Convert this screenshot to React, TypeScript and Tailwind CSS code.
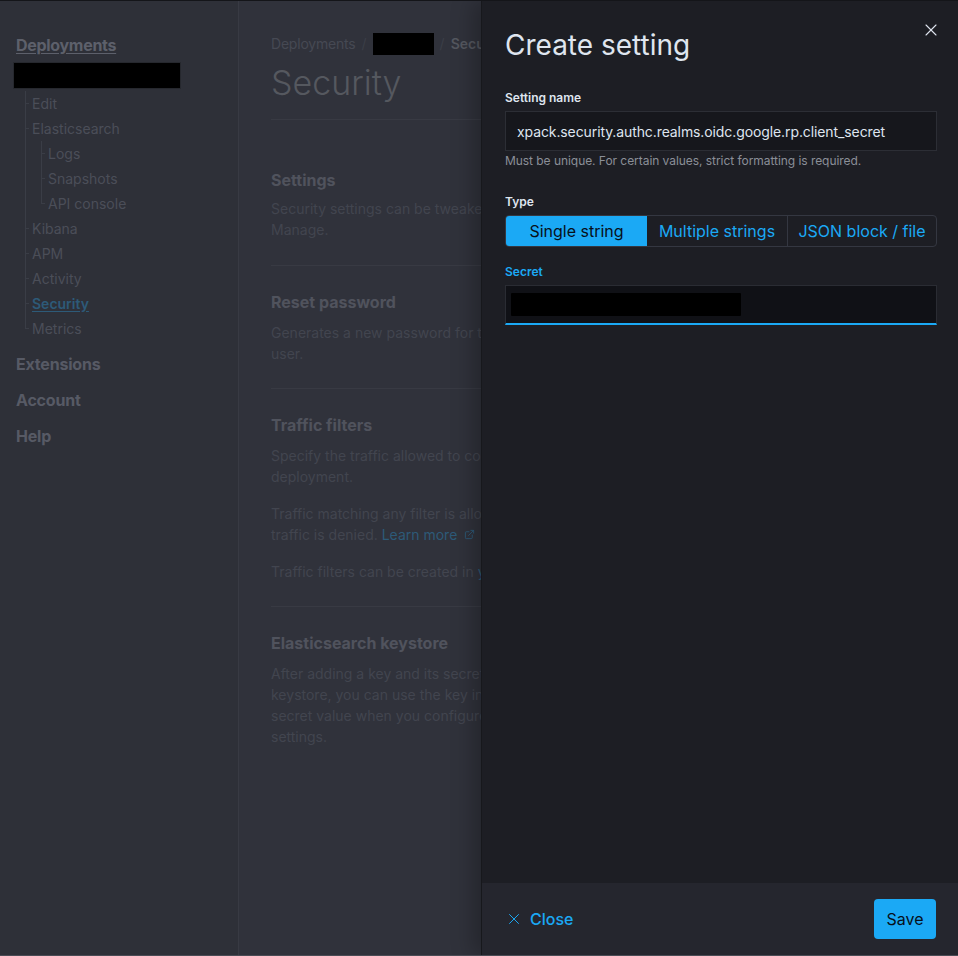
import React from 'react';
import { X, ExternalLink } from 'lucide-react';

const font = { fontFamily: 'Inter, "Noto Sans", sans-serif' };

const Redacted = ({ className }: { className: string }) => (
  <div className={`bg-black ${className}`} />
);

const TreeItem = ({
  label,
  last,
  active,
  children,
}: {
  label: string;
  last?: boolean;
  active?: boolean;
  children?: React.ReactNode;
}) => (
  <div className="relative">
    {/* vertical guide + tick */}
    <span
      className={`absolute left-0 top-0 w-px bg-[#3a3d46] ${last ? 'h-[13px]' : 'h-full'}`}
    />
    <div className="flex h-[25px] items-center">
      <span className="h-px w-[4px] bg-[#3a3d46]" />
      <span
        className={`ml-[3px] ${
          active ? 'font-semibold text-[#2d5a78] underline underline-offset-2' : 'text-[#4b4e58]'
        }`}
      >
        {label}
      </span>
    </div>
    {children}
  </div>
);

const Section = ({ title, children }: { title: string; children: React.ReactNode }) => (
  <div className="border-b border-[#383a43] pt-[24px] pb-[24px]">
    <h3 className="text-[16px] leading-[24px] font-bold text-[#50535d]">{title}</h3>
    <div className="mt-[8px] space-y-[16px] text-[14px] leading-[21px] text-[#42454f]">{children}</div>
  </div>
);

export default function App() {
  return (
    <div
      style={font}
      className="relative flex h-[956px] w-[958px] overflow-hidden border-t border-b border-t-[#141519] border-b-[#4a4c55] bg-[#30323b]"
    >
      {/* Sidebar */}
      <aside className="w-[239px] shrink-0 border-r border-[#383a43] bg-[#2e3038] pt-[32px]">
        <div className="px-4">
          <a className="text-[16px] leading-[24px] font-bold tracking-[-0.3px] text-[#5d606b] underline underline-offset-2">
            Deployments
          </a>
        </div>
        <div className="ml-[13px] mt-[5px]">
          <Redacted className="h-[27px] w-[168px] border border-[#26282e]" />
        </div>
        <div className="ml-[25px] mt-[2px] text-[14px]">
          <TreeItem label="Edit" />
          <TreeItem label="Elasticsearch">
            <div className="ml-[16px]">
              <TreeItem label="Logs" />
              <TreeItem label="Snapshots" />
              <TreeItem label="API console" last />
            </div>
          </TreeItem>
          <TreeItem label="Kibana" />
          <TreeItem label="APM" />
          <TreeItem label="Activity" />
          <TreeItem label="Security" active />
          <TreeItem label="Metrics" last />
        </div>
        <div className="mt-[5px] px-4 text-[16px] font-bold tracking-[-0.2px] text-[#575a65]">
          <div className="flex h-[36px] items-center">Extensions</div>
          <div className="flex h-[36px] items-center">Account</div>
          <div className="flex h-[36px] items-center">Help</div>
        </div>
      </aside>

      {/* Main page content (dimmed under flyout) */}
      <main className="flex-1 pl-[32px] pt-[32px]">
        <div className="flex items-center gap-[6px] text-[14px] leading-[22px] text-[#464953]">
          <span className="tracking-[-0.2px]">Deployments</span>
          <span className="text-[#3b3e47]">/</span>
          <Redacted className="h-[22px] w-[61px]" />
          <span className="text-[#3b3e47]">/</span>
          <span className="font-semibold text-[#54575f]">Security</span>
        </div>
        <h1 className="mt-[8px] text-[34px] leading-[40px] font-light text-[#55585f]">Security</h1>
        <div className="w-[420px]">
          <div className="mt-[16px] border-b border-[#383a43]" />
          <div className="pt-[48px]">
            <div className="border-b border-[#383a43] pb-[25px]">
              <h3 className="text-[16px] leading-[24px] font-bold text-[#50535d]">Settings</h3>
              <div className="mt-[6px] text-[14px] leading-[21px] text-[#42454f]">
                <p>
                  Security settings can be tweaked in the user
                  <br />
                  Manage.
                </p>
              </div>
            </div>
          </div>
          <Section title="Reset password">
            <p>
              Generates a new password for the elastic
              <br />
              user.
            </p>
          </Section>
          <Section title="Traffic filters">
            <p>
              Specify the traffic allowed to connect to this
              <br />
              deployment.
            </p>
            <p>
              Traffic matching any filter is allowed. All other
              <br />
              traffic is denied.{' '}
              <span className="text-[#2d5a78]">
                Learn more <ExternalLink className="ml-[3px] inline h-[11px] w-[11px] align-baseline" />
              </span>
            </p>
            <p>
              Traffic filters can be created in <span className="text-[#2d5a78]">your account</span>
            </p>
          </Section>
          <div className="pt-[24px]">
            <h3 className="text-[16px] leading-[24px] font-bold text-[#50535d]">Elasticsearch keystore</h3>
            <div className="mt-[8px] text-[14px] leading-[21px] text-[#42454f]">
              <p>
                After adding a key and its secret value to the
                <br />
                keystore, you can use the key in place of the
                <br />
                secret value when you configure sensitive
                <br />
                settings.
              </p>
            </div>
          </div>
        </div>
      </main>

      {/* Flyout */}
      <section className="absolute top-0 right-0 bottom-0 flex w-[477px] flex-col border-l border-[#17181c] bg-[#1d1e24] shadow-[-8px_0_20px_rgba(0,0,0,0.25)]">
        <button className="absolute top-[19px] right-[17px] text-[#dfe5ef]">
          <X className="h-[20px] w-[20px]" strokeWidth={1.3} />
        </button>
        <div className="flex-1 pl-[23px] pr-[21px] pt-[26px]">
          <h2 className="text-[28px] leading-[36px] font-normal text-[#dfe5ef]">Create setting</h2>

          <label className="mt-[27px] block text-[12px] leading-[16px] font-semibold text-[#dfe5ef]">
            Setting name
          </label>
          <div className="mt-[5px] flex h-[40px] items-center border border-[#2c2e35] bg-[#16171c] px-[11px] text-[14px] tracking-[-0.1px] text-[#dfe5ef]">
            xpack.security.authc.realms.oidc.google.rp.client_secret
          </div>
          <p className="mt-[2px] text-[12px] leading-[16px] tracking-[-0.05px] text-[#8b8f98]">
            Must be unique. For certain values, strict formatting is required.
          </p>

          <label className="mt-[26px] block text-[12px] leading-[14px] font-semibold text-[#dfe5ef]">
            Type
          </label>
          <div className="mt-[6px] flex h-[32px] overflow-hidden rounded-[4px] border border-[#343741] text-[16px]">
            <button className="w-[141px] bg-[#1ba9f5] text-[#07101a]">Single string</button>
            <button className="w-[141px] border-r border-[#343741] text-[#1ba9f5]">Multiple strings</button>
            <button className="flex-1 text-[#1ba9f5]">JSON block / file</button>
          </div>

          <label className="mt-[17px] block text-[12px] leading-[16px] font-semibold text-[#1ba9f5]">
            Secret
          </label>
          <div className="mt-[5px] flex h-[40px] items-center border-x border-t border-[#2a2c33] border-b-2 border-b-[#1ba9f5] bg-[#101116] px-[5px]">
            <Redacted className="h-[23px] w-[230px] rounded-[1px]" />
          </div>
        </div>

        <footer className="flex h-[72px] items-center justify-between bg-[#25262e] pl-[23px] pr-[22px]">
          <button className="flex items-center gap-[7px] text-[16px] font-medium text-[#1ba9f5]">
            <X className="h-[18px] w-[18px]" strokeWidth={1.3} />
            Close
          </button>
          <button className="h-[40px] w-[62px] rounded-[4px] bg-[#1ba9f5] text-[16px] text-[#07101a]">Save</button>
        </footer>
      </section>
    </div>
  );
}
